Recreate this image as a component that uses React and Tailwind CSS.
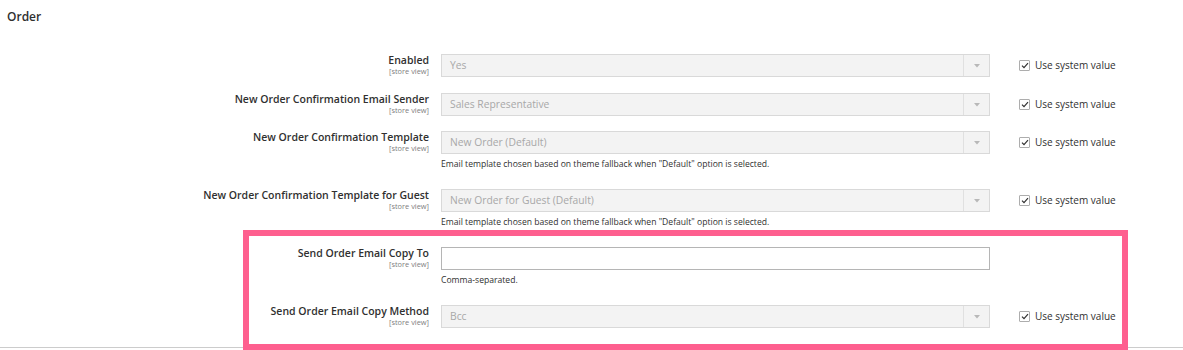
import React from "react";

const font = { fontFamily: '"Open Sans", "Noto Sans", sans-serif' };

function Check() {
  return (
    <div className="flex items-center gap-[5px] text-[10px] leading-[14px] text-[#303030]">
      <span className="flex h-[11px] w-[11px] items-center justify-center rounded-[1px] border border-[#adadad] bg-white">
        <svg width="8" height="7" viewBox="0 0 8 7">
          <path d="M1 3.6 L3 5.6 L7 1.2" fill="none" stroke="#303030" strokeWidth="1.2" />
        </svg>
      </span>
      <span>Use system value</span>
    </div>
  );
}

function Select({ value }) {
  return (
    <div className="flex h-[23px] w-[549px] items-center border border-[#d9d9d9] bg-[#f3f3f3]">
      <span className="flex-1 pl-[8px] text-[10.3px] text-[#a8a8a8]">{value}</span>
      <span className="flex h-full w-[26px] items-center justify-center border-l border-[#e0e0e0]">
        <svg width="6" height="4" viewBox="0 0 6 4">
          <path d="M0 0 L6 0 L3 3.5 Z" fill="#b8b8b8" />
        </svg>
      </span>
    </div>
  );
}

function Input() {
  return <div className="h-[23px] w-[549px] border border-[#b5b5b5] bg-white" />;
}

function Row({ label, control, hint, check = true, className = "" }) {
  return (
    <div className={"flex " + className}>
      <div className="w-[429px] shrink-0 text-right">
        <div className="text-[10.5px] font-semibold leading-[13px] text-[#303030]">{label}</div>
        <div className="text-[7.4px] leading-[9px] text-[#808080]">[store view]</div>
      </div>
      <div className="ml-[12px] w-[549px] shrink-0">
        {control}
        {hint && (
          <div className="mt-[5px] text-[8.6px] leading-[10px] text-[#303030]">{hint}</div>
        )}
      </div>
      {check && (
        <div className="ml-[29px] mt-[4px]">
          <Check />
        </div>
      )}
    </div>
  );
}

export default function App() {
  const hint = 'Email template chosen based on theme fallback when "Default" option is selected.';
  return (
    <div className="relative h-[350px] w-[1183px] overflow-hidden bg-white" style={font}>
      <div className="pl-[7px] pt-[9px] text-[12px] font-semibold leading-[16px] text-[#303030]">Order</div>
      <div className="mt-[29px]">
        <Row label="Enabled" control={<Select value="Yes" />} className="mb-[16px]" />
        <Row label="New Order Confirmation Email Sender" control={<Select value="Sales Representative" />} className="mb-[15px]" />
        <Row label="New Order Confirmation Template" control={<Select value="New Order (Default)" />} hint={hint} className="mb-[20px]" />
        <Row label="New Order Confirmation Template for Guest" control={<Select value="New Order for Guest (Default)" />} hint={hint} className="mb-[20px]" />
        <Row label="Send Order Email Copy To" control={<Input />} hint="Comma-separated." check={false} className="mb-[20px]" />
        <Row label="Send Order Email Copy Method" control={<Select value="Bcc" />} />
      </div>
      <div className="mt-[19px] border-t border-[#cccccc]" />
      <div className="pointer-events-none absolute left-[243px] top-[230px] h-[120px] w-[885px] border-[6px] border-[#fe5f8f]" />
    </div>
  );
}
